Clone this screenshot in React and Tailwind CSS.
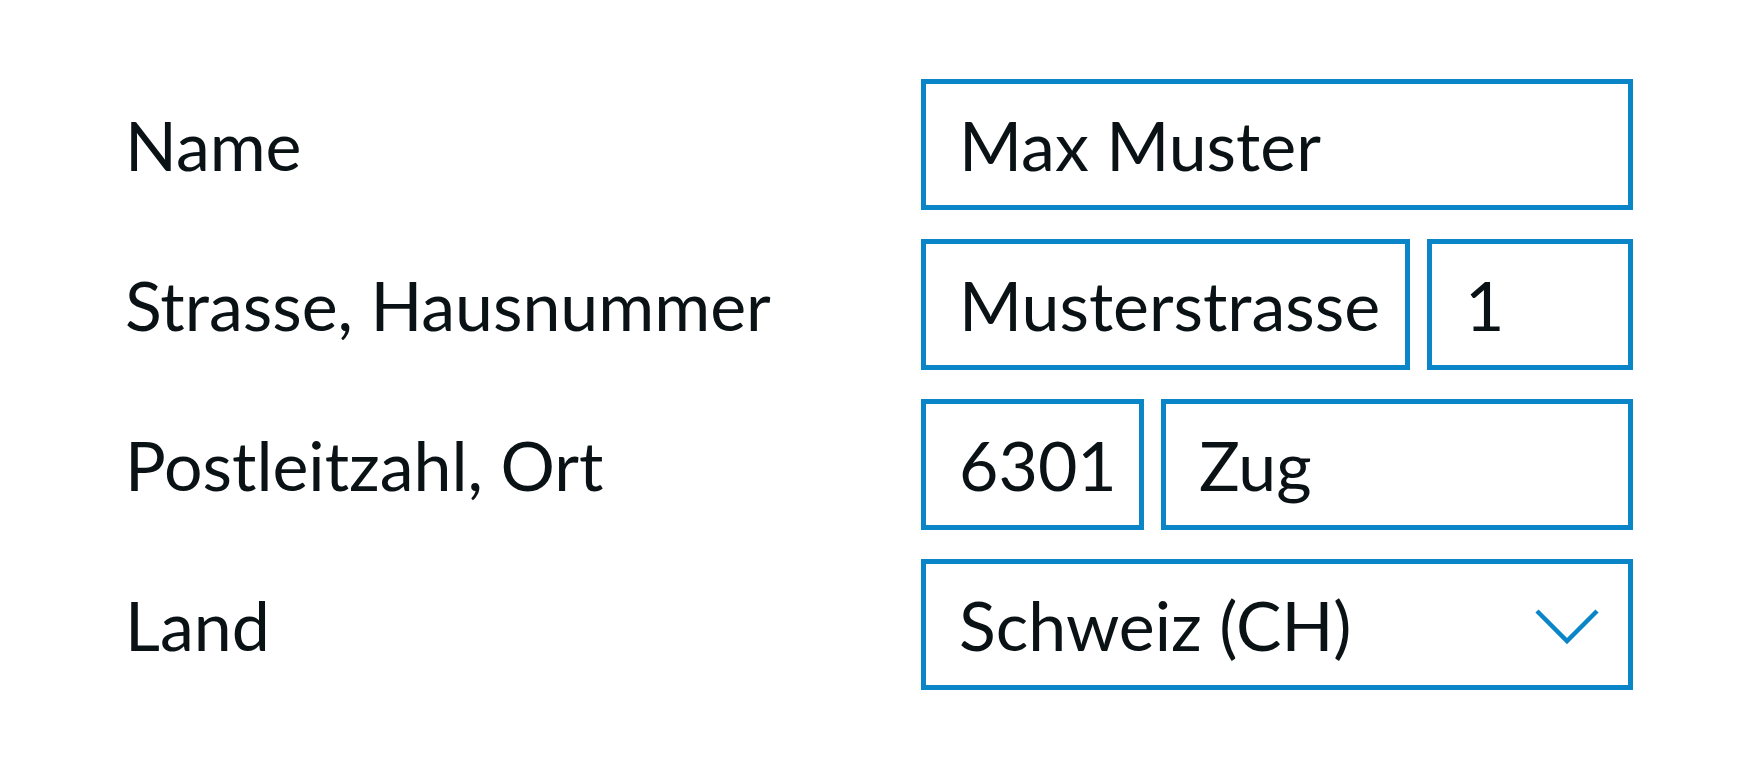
import React from "react";

const font = { fontFamily: 'Lato, "Open Sans", sans-serif' };

function Field({ children, className = "" }) {
  return (
    <div
      className={`flex h-[131px] items-center border-[5px] border-[#0a86c8] bg-white pl-[33px] text-[68px] leading-none text-[#0a1216] ${className}`}
    >
      {children}
    </div>
  );
}

function Chevron() {
  return (
    <svg width="66" height="38" viewBox="0 0 66 38" fill="none" className="mt-[4px] shrink-0">
      <path d="M3 3 L33 33 L63 3" stroke="#0a86c8" strokeWidth="4.5" strokeLinejoin="miter" />
    </svg>
  );
}

function Label({ children }) {
  return <div className="flex h-[131px] items-center text-[68px] leading-none text-[#0a1216]">{children}</div>;
}

export default function App() {
  return (
    <div className="h-[776px] w-[1750px] bg-white" style={font}>
      <div className="grid grid-cols-[796px_712px] gap-y-[29px] pl-[125px] pt-[79px]">
        <Label>Name</Label>
        <Field>Max Muster</Field>

        <Label>Strasse, Hausnummer</Label>
        <div className="flex gap-[17px]">
          <Field className="w-[489px]">Musterstrasse</Field>
          <Field className="flex-1">1</Field>
        </div>

        <Label>Postleitzahl, Ort</Label>
        <div className="flex gap-[17px]">
          <Field className="w-[223px]">6301</Field>
          <Field className="flex-1">Zug</Field>
        </div>

        <Label>Land</Label>
        <Field className="justify-between pr-[28px]">
          <span>Schweiz (CH)</span>
          <Chevron />
        </Field>
      </div>
    </div>
  );
}
